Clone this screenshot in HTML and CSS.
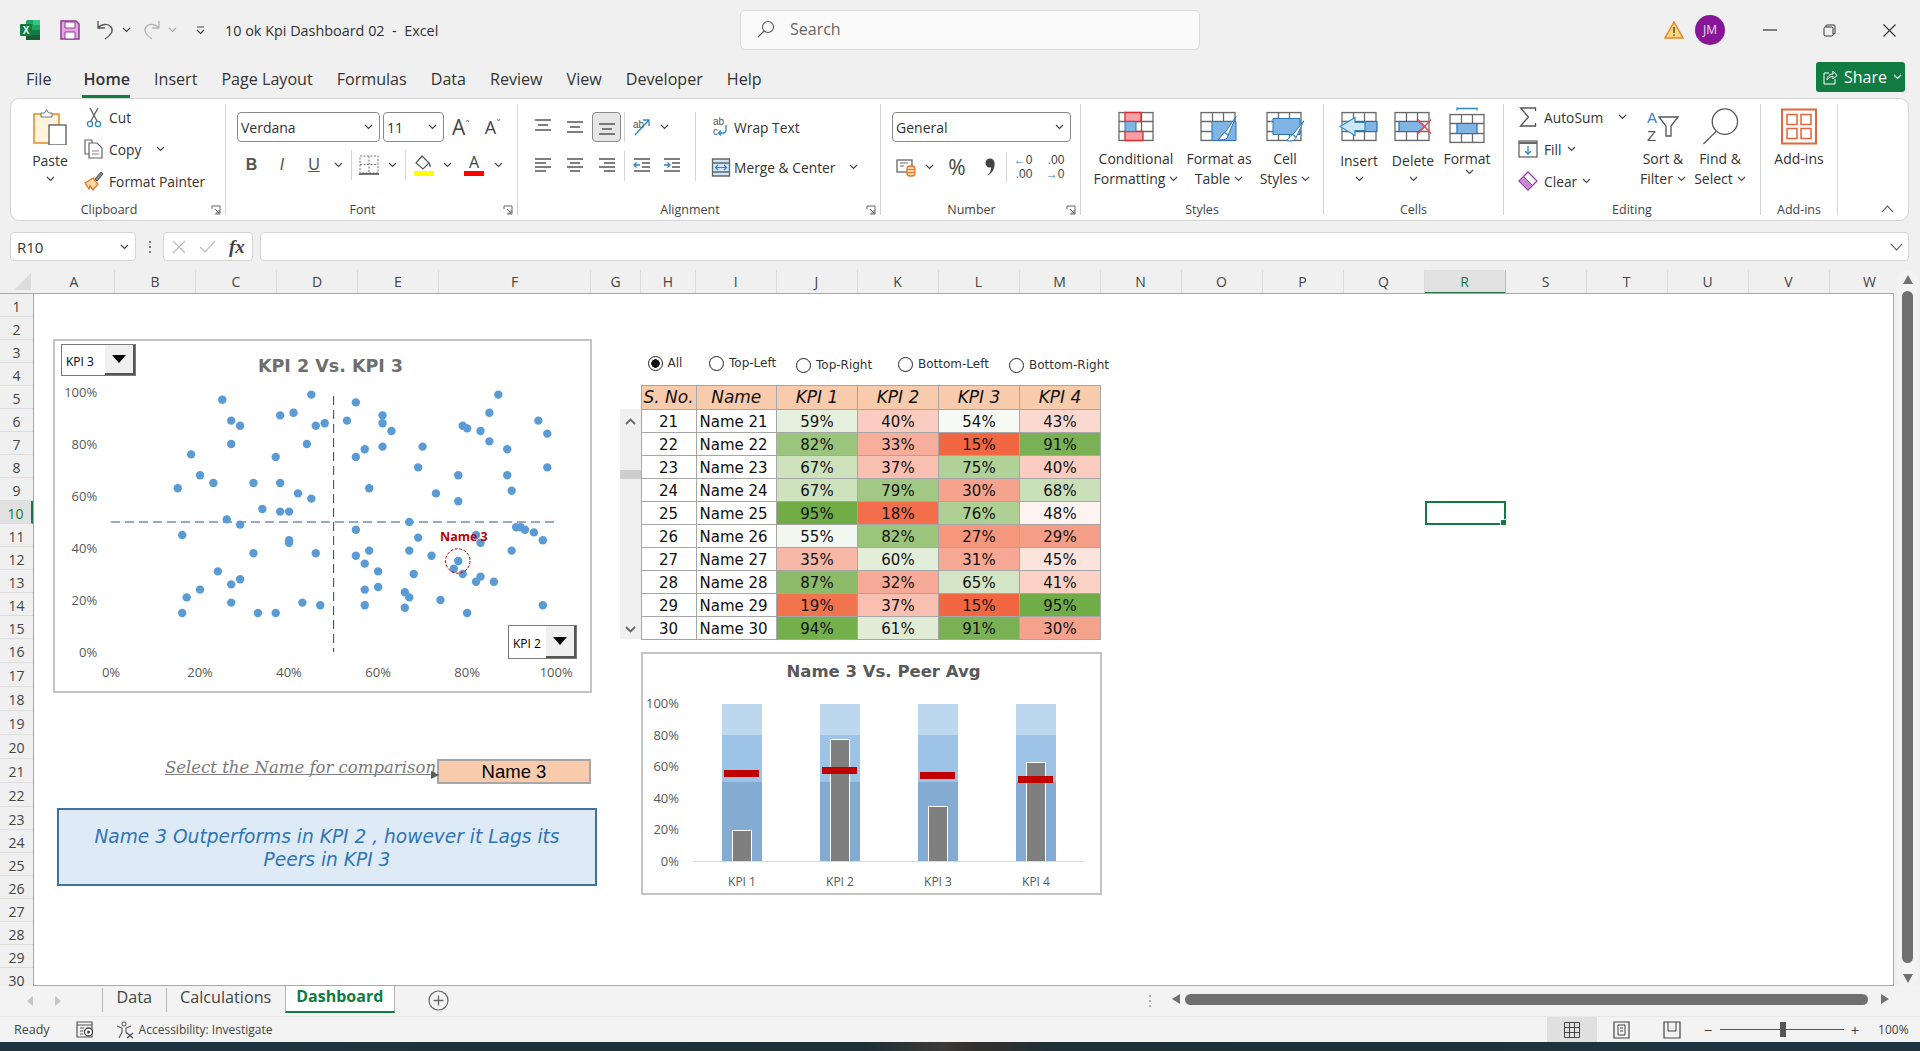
FILE: index.html
```html
<!DOCTYPE html>
<html lang="en">

<head>
    <meta charset="UTF-8">
    <meta name="viewport" content="width=device-width, initial-scale=1.0">
    <title>10 ok Kpi Dashboard 02 - Excel</title>
    <link rel="stylesheet" href="styles.css">
</head>

<body>
    <!-- shared small glyphs -->
    <svg class="sprite" aria-hidden="true">
        <symbol id="caret" viewBox="0 0 9 6"><path d="M1 1l3.5 3.5L8 1" fill="none" stroke="currentColor" stroke-width="1.2"/></symbol>
        <symbol id="launcher" viewBox="0 0 10 10"><path d="M1 4V1h8v8H4M4 4l4 4M8 5v3H5" fill="none" stroke="#666" stroke-width="1"/></symbol>
        <symbol id="al-top" viewBox="0 0 18 18"><path d="M1 2h16M4 7h10M1 12h16" fill="none" stroke="#555" stroke-width="1.4"/></symbol>
        <symbol id="al-mid" viewBox="0 0 18 18"><path d="M1 4h16M4 9h10M1 14h16" fill="none" stroke="#555" stroke-width="1.4"/></symbol>
        <symbol id="al-bot" viewBox="0 0 18 18"><path d="M1 6h16M4 11h10M1 16h16" fill="none" stroke="#555" stroke-width="1.4"/></symbol>
        <symbol id="al-left" viewBox="0 0 18 18"><path d="M1 2h16M1 6h11M1 10h16M1 14h11" fill="none" stroke="#555" stroke-width="1.4"/></symbol>
        <symbol id="al-center" viewBox="0 0 18 18"><path d="M1 2h16M4 6h10M1 10h16M4 14h10" fill="none" stroke="#555" stroke-width="1.4"/></symbol>
        <symbol id="al-right" viewBox="0 0 18 18"><path d="M1 2h16M6 6h11M1 10h16M6 14h11" fill="none" stroke="#555" stroke-width="1.4"/></symbol>
        <symbol id="grid-3" viewBox="0 0 36 30"><path d="M1 1h34v28H1zM12.500 1v28M23.500 1v28M1 10h34M1 20h34" fill="#fff" stroke="#6a6a6a" stroke-width="1.300"/></symbol>
    </svg>

    <div class="app">
        <!-- title bar -->
        <header class="titlebar">
            <div class="quick">
                <svg class="ic-excel" width="20" height="20" viewBox="0 0 20 20">
                    <rect x="6" y="0" width="14" height="20" rx="1.500" fill="#21a366"/>
                    <rect x="6" y="10" width="14" height="5" fill="#107c41"/>
                    <rect x="6" y="15" width="14" height="5" fill="#185c37"/>
                    <rect x="13" y="0" width="7" height="5" fill="#33c481"/>
                    <rect x="0" y="4" width="12" height="12" rx="1" fill="#107c41"/>
                    <text x="6" y="13.500" class="ic-excel-x">X</text>
                </svg>
                <svg class="ic-save" width="20" height="20" viewBox="0 0 20 20">
                    <path d="M1 1h15l3 3v15H1z" fill="#e7a6e0" stroke="#8e3a96" stroke-width="1.500"/>
                    <path d="M5 2h10v6H5zM5 12h10v7H5z" fill="#fff" stroke="#8e3a96"/>
                </svg>
                <svg class="ic-undo" width="19" height="20" viewBox="0 0 19 20"><path d="M2 1v7h7M2 8c3-4 10-5 13-1 3 4 0 8-6 12" fill="none" stroke="#555" stroke-width="1.300"/></svg>
                <svg class="caret"><use href="#caret"/></svg>
                <svg class="ic-redo" width="19" height="20" viewBox="0 0 19 20"><path d="M17 1v7h-7M17 8c-3-4-10-5-13-1-3 4 0 8 6 12" fill="none" stroke="#b5b5b5" stroke-width="1.300"/></svg>
                <svg class="caret faint"><use href="#caret"/></svg>
                <svg class="ic-custom" width="9" height="9" viewBox="0 0 9 9"><path d="M1 1h7M1 4l3.500 3.500L8 4" fill="none" stroke="#444" stroke-width="1.100"/></svg>
                <span class="doc-title">10 ok Kpi Dashboard 02&nbsp; -&nbsp; Excel</span>
            </div>
            <div class="search">
                <svg width="18" height="18" viewBox="0 0 18 18"><circle cx="11" cy="7" r="5.500" fill="none" stroke="#555" stroke-width="1.100"/><path d="M7 11l-6 6" stroke="#555" stroke-width="1.100"/></svg>
                <span>Search</span>
            </div>
            <div class="win-controls">
                <svg class="ic-warn" width="20" height="18" viewBox="0 0 20 18"><path d="M10 1l9 16H1z" fill="#fcd87f" stroke="#e8842a" stroke-width="1.500"/><path d="M10 6v6M10 13.500v1.500" stroke="#333" stroke-width="1.300"/></svg>
                <div class="avatar">JM</div>
                <svg class="ic-min" width="14" height="2" viewBox="0 0 14 2"><path d="M0 1h14" stroke="#333" stroke-width="1.200"/></svg>
                <svg class="ic-restore" width="13" height="13" viewBox="0 0 13 13"><path d="M3 3V2q0-1 1-1h7q1 0 1 1v7q0 1-1 1h-1" fill="none" stroke="#333"/><rect x="1" y="3" width="9" height="9" rx="1.500" fill="none" stroke="#333"/></svg>
                <svg class="ic-close" width="13" height="13" viewBox="0 0 13 13"><path d="M.5.500l12 12M12.500.500l-12 12" stroke="#333" stroke-width="1.100"/></svg>
            </div>
        </header>

        <!-- ribbon tabs -->
        <nav class="tabs">
            <a>File</a>
            <a class="on">Home</a>
            <a>Insert</a>
            <a>Page Layout</a>
            <a>Formulas</a>
            <a>Data</a>
            <a>Review</a>
            <a>View</a>
            <a>Developer</a>
            <a>Help</a>
            <button class="share">
                <svg width="15" height="15" viewBox="0 0 15 15"><path d="M6 3H1v11h11V9M4 10c0-4 3-6 6-6V1l4 4.500L10 9V6.500c-3 0-4 1-6 3.500z" fill="none" stroke="#fff" stroke-width="1"/></svg>
                <span>Share</span>
                <svg class="caret light"><use href="#caret"/></svg>
            </button>
        </nav>

        <!-- ribbon -->
        <section class="ribbon">
            <div class="group g-clip launched">
                <div class="group-body">
                    <div class="big low paste">
                        <svg class="big-ic" width="34" height="37" viewBox="0 0 34 37">
                            <rect x="1" y="6" width="25" height="29" fill="#fff4dc" stroke="#e8912d" stroke-width="1.600"/>
                            <path d="M8 9V5h3.500l2-3.500 2 3.500H19v4z" fill="#fff" stroke="#777"/>
                            <rect x="16" y="17" width="17" height="20" fill="#fff" stroke="#666" stroke-width="1.400"/>
                        </svg>
                        <span>Paste</span>
                        <svg class="caret"><use href="#caret"/></svg>
                    </div>
                    <div class="stack">
                        <div class="small">
                            <svg width="16" height="21" viewBox="0 0 16 21"><path d="M4 1l7 13M12 1L5 14" stroke="#555" stroke-width="1.200"/><circle cx="4" cy="17" r="2.600" fill="none" stroke="#2e86c9" stroke-width="1.300"/><circle cx="12" cy="17" r="2.600" fill="none" stroke="#2e86c9" stroke-width="1.300"/></svg>
                            <span>Cut</span>
                        </div>
                        <div class="small">
                            <svg width="20" height="20" viewBox="0 0 20 20"><path d="M5 15H1V1h7v3" fill="none" stroke="#666" stroke-width="1.200"/><path d="M5 4h8l5 5v10H5z" fill="#fff" stroke="#666" stroke-width="1.200"/><path d="M8 12h7M8 15h7" stroke="#888"/></svg>
                            <span>Copy</span>
                            <svg class="caret copy-caret"><use href="#caret"/></svg>
                        </div>
                        <div class="small">
                            <svg width="20" height="20" viewBox="0 0 20 20"><path d="M1 12l8-5 5 6-5 6-3-4-1 3z" fill="#fbd8a6" stroke="#e0782a" stroke-width="1.300"/><path d="M11 8l6-7 2 2-6 7z" fill="#888" stroke="#555"/></svg>
                            <span>Format Painter</span>
                        </div>
                    </div>
                </div>
                <div class="group-label">Clipboard</div>
                <svg class="launcher"><use href="#launcher"/></svg>
            </div>

            <div class="group g-font launched">
                <div class="group-body column">
                    <div class="row-top font-top">
                        <div class="combo font-name"><span>Verdana</span><svg class="caret"><use href="#caret"/></svg></div>
                        <div class="combo font-size"><span>11</span><svg class="caret"><use href="#caret"/></svg></div>
                        <span class="grow">A<sup>&#710;</sup></span>
                        <span class="shrink">A<sup>&#711;</sup></span>
                    </div>
                    <div class="tool-row font-tools">
                        <b class="tool">B</b>
                        <i class="tool ital">I</i>
                        <u class="tool">U</u>
                        <svg class="caret"><use href="#caret"/></svg>
                        <span class="vsep"></span>
                        <svg width="20" height="20" viewBox="0 0 20 20"><path d="M1 1h18v17H1zM10 1v17M1 9.500h18" fill="none" stroke="#777" stroke-dasharray="2 1.500"/><path d="M0 19h20" stroke="#444" stroke-width="1.500"/></svg>
                        <svg class="caret"><use href="#caret"/></svg>
                        <span class="vsep"></span>
                        <span class="color-tool">
                            <svg width="20" height="17" viewBox="0 0 20 17"><path d="M2 9l6-7 7 7-6 6z" fill="#fff" stroke="#555" stroke-width="1.200"/><path d="M15 8c1 1 2 3 2 4s-2 1-2 0z" fill="#2e75b6"/></svg>
                            <i class="swatch yellow"></i>
                        </span>
                        <svg class="caret"><use href="#caret"/></svg>
                        <span class="color-tool text-a">A<i class="swatch red"></i></span>
                        <svg class="caret"><use href="#caret"/></svg>
                    </div>
                </div>
                <div class="group-label">Font</div>
                <svg class="launcher"><use href="#launcher"/></svg>
            </div>

            <div class="group g-align launched">
                <div class="group-body">
                    <div class="align-grid">
                        <svg class="al"><use href="#al-top"/></svg>
                        <svg class="al"><use href="#al-mid"/></svg>
                        <span class="al-on"><svg class="al"><use href="#al-bot"/></svg></span>
                        <span class="vsep"></span>
                        <svg width="20" height="20" viewBox="0 0 20 20"><path d="M3 18L17 3M11 3h6v6" fill="none" stroke="#2e86c9" stroke-width="1.300"/><text x="1" y="11" class="ic-ab">ab</text></svg>
                        <svg class="caret orient-caret"><use href="#caret"/></svg>

                        <svg class="al"><use href="#al-left"/></svg>
                        <svg class="al"><use href="#al-center"/></svg>
                        <svg class="al"><use href="#al-right"/></svg>
                        <span class="vsep"></span>
                        <svg width="18" height="18" viewBox="0 0 18 18"><path d="M1 2h16M9 6h8M9 10h8M1 14h16" stroke="#555" stroke-width="1.300"/><path d="M7 8H1M3.500 5.500L1 8l2.500 2.500" fill="none" stroke="#2e86c9" stroke-width="1.300"/></svg>
                        <svg width="18" height="18" viewBox="0 0 18 18"><path d="M1 2h16M9 6h8M9 10h8M1 14h16" stroke="#555" stroke-width="1.300"/><path d="M1 8h6M4.500 5.500L7 8l-2.500 2.500" fill="none" stroke="#2e86c9" stroke-width="1.300"/></svg>
                    </div>
                    <div class="wrap-col">
                        <div class="small wide">
                            <svg width="18" height="20" viewBox="0 0 18 20"><text x="1" y="8" class="ic-ab">ab</text><text x="1" y="18" class="ic-ab">c</text><path d="M14 8v5q0 3-3 3H7M9 13.500L6.500 16 9 18.500" fill="none" stroke="#2e86c9" stroke-width="1.300"/></svg>
                            <span>Wrap Text</span>
                        </div>
                        <div class="small wide merge">
                            <svg width="19" height="19" viewBox="0 0 19 19"><path d="M1 1h17v17H1z" fill="#cfe6f7" stroke="#666" stroke-width="1.300"/><path d="M1 5h17M1 14h17" stroke="#666" stroke-width="1.300"/><path d="M4 9.500h11M6.500 7L4 9.500 6.500 12M12.500 7L15 9.500 12.500 12" fill="none" stroke="#2e86c9" stroke-width="1.200"/></svg>
                            <span>Merge &amp; Center</span>
                            <svg class="caret merge-caret"><use href="#caret"/></svg>
                        </div>
                    </div>
                </div>
                <div class="group-label">Alignment</div>
                <svg class="launcher"><use href="#launcher"/></svg>
            </div>

            <div class="group g-num launched">
                <div class="group-body column">
                    <div class="row-top"><div class="combo num-format"><span>General</span><svg class="caret"><use href="#caret"/></svg></div></div>
                    <div class="tool-row num-tools">
                        <svg width="20" height="20" viewBox="0 0 20 20"><rect x="1" y="3" width="15" height="12" fill="#fff" stroke="#666" stroke-width="1.300"/><path d="M4 6h8M4 9h4" stroke="#666"/><rect x="11" y="9" width="8" height="10" rx="3" fill="#fbd8a6" stroke="#e0782a" stroke-width="1.300"/><path d="M11 12.500h8M11 15.500h8" stroke="#e0782a"/></svg>
                        <svg class="caret"><use href="#caret"/></svg>
                        <span class="percent">%</span>
                        <svg width="10" height="18" viewBox="0 0 10 18"><circle cx="5" cy="5" r="4.500" fill="#444"/><path d="M9.500 5c.5 6-2.500 10.500-7 12.500 2.500-2.500 3.500-5 3.500-8z" fill="#444"/></svg>
                        <span class="vsep"></span>
                        <span class="dec"><em><b>&#8592;</b>0</em><em>.00</em></span>
                        <span class="dec"><em>.00</em><em><b>&#8594;</b>0</em></span>
                    </div>
                </div>
                <div class="group-label">Number</div>
                <svg class="launcher"><use href="#launcher"/></svg>
            </div>

            <div class="group g-styles">
                <div class="group-body">
                    <div class="big cond">
                        <svg class="big-ic" width="36" height="30" viewBox="0 0 36 30"><use href="#grid-3" width="36" height="30"/><path d="M7 1h16v9H7zM7 20h18v9H7z" fill="#f7a1a6" stroke="#d92d32" stroke-width="1.300"/><path d="M7 10h11v10H7z" fill="#7fb4e4" stroke="#2f75b5"/></svg>
                        <span>Conditional</span>
                        <span>Formatting<svg class="caret"><use href="#caret"/></svg></span>
                    </div>
                    <div class="big fmt">
                        <svg class="big-ic" width="38" height="30" viewBox="0 0 38 30"><use href="#grid-3" width="36" height="30"/><path d="M12 10h24v19H12z" fill="#7fb4e4" stroke="#2f75b5"/><path d="M36 5L25 21l3 3zM25 21c-4 1-3 5-7 7 5 1 10 0 10-4z" fill="#fff" stroke="#2f75b5"/></svg>
                        <span>Format as</span>
                        <span>Table<svg class="caret"><use href="#caret"/></svg></span>
                    </div>
                    <div class="big cell">
                        <svg class="big-ic" width="38" height="30" viewBox="0 0 38 30"><use href="#grid-3" width="36" height="30"/><path d="M7 7h27v16H7z" fill="#7fb4e4" stroke="#2f75b5"/><path d="M38 9L27 23l3 3zM27 23c-4 1-3 4-7 6 5 1 10 0 10-3z" fill="#fff" stroke="#2f75b5"/></svg>
                        <span>Cell</span>
                        <span>Styles<svg class="caret"><use href="#caret"/></svg></span>
                    </div>
                </div>
                <div class="group-label">Styles</div>
            </div>

            <div class="group g-cells">
                <div class="group-body">
                    <div class="big low">
                        <svg class="big-ic" width="40" height="30" viewBox="0 0 40 30"><g transform="translate(2)"><use href="#grid-3" width="36" height="30"/></g><path d="M8 10h30v10H8z" fill="#7fb4e4" stroke="#1f6fb5" stroke-width="1.200"/><path d="M16 6L1 15l15 9v-5h10v-8H16z" fill="#cfe6f7" stroke="#2e86c9" stroke-width="1.200"/></svg>
                        <span>Insert</span>
                        <svg class="caret"><use href="#caret"/></svg>
                    </div>
                    <div class="big low">
                        <svg class="big-ic" width="38" height="30" viewBox="0 0 38 30"><use href="#grid-3" width="36" height="30"/><path d="M5 10h20l6 5-6 5H5z" fill="#7fb4e4" stroke="#1f6fb5" stroke-width="1.200"/><path d="M24 8l13 14M37 8L24 22" stroke="#f0484e" stroke-width="1.500"/></svg>
                        <span>Delete</span>
                        <svg class="caret"><use href="#caret"/></svg>
                    </div>
                    <div class="big">
                        <svg class="big-ic fmt-cell" width="36" height="36" viewBox="0 0 36 36"><path d="M8 1h20M8 0v3M28 0v3" stroke="#2e86c9" stroke-width="1.300"/><g transform="translate(0 6)"><use href="#grid-3" width="36" height="30"/></g><path d="M8 16h20v10H8z" fill="#7fb4e4" stroke="#1f6fb5" stroke-width="1.200"/></svg>
                        <span>Format</span>
                        <svg class="caret"><use href="#caret"/></svg>
                    </div>
                </div>
                <div class="group-label">Cells</div>
            </div>

            <div class="group g-edit">
                <div class="group-body">
                    <div class="stack edit-stack">
                        <div class="small">
                            <svg width="17" height="20" viewBox="0 0 17 20"><path d="M16 4V1H1l8 9-8 9h15v-3" fill="none" stroke="#555" stroke-width="1.300"/></svg>
                            <span>AutoSum</span>
                            <svg class="caret sum-caret"><use href="#caret"/></svg>
                        </div>
                        <div class="small">
                            <svg width="20" height="18" viewBox="0 0 20 18"><rect x="1" y="1" width="18" height="16" fill="#fff" stroke="#666" stroke-width="1.300"/><path d="M1 3h18" stroke="#666" stroke-width="2"/><path d="M10 6v8M7 11l3 3 3-3" fill="none" stroke="#2e86c9" stroke-width="1.300"/></svg>
                            <span>Fill</span>
                            <svg class="caret"><use href="#caret"/></svg>
                        </div>
                        <div class="small">
                            <svg width="20" height="20" viewBox="0 0 20 20"><path d="M10 1l9 9-9 9-9-9z" fill="#fff" stroke="#9a3fa8" stroke-width="1.300"/><path d="M5.500 5.500l9 9L10 19l-9-9z" fill="#c68ad0" stroke="#9a3fa8"/></svg>
                            <span>Clear</span>
                            <svg class="caret"><use href="#caret"/></svg>
                        </div>
                    </div>
                    <div class="big sort">
                        <div class="big-ic sort-ic">
                            <span class="az"><em>A</em><em>Z</em></span>
                            <svg width="21" height="21" viewBox="0 0 21 21"><path d="M1 1h19l-7 9v10h-5V10z" fill="#fff" stroke="#555" stroke-width="1.300"/></svg>
                        </div>
                        <span>Sort &amp;</span>
                        <span>Filter<svg class="caret"><use href="#caret"/></svg></span>
                    </div>
                    <div class="big find">
                        <svg class="big-ic" width="37" height="38" viewBox="0 0 37 38"><circle cx="23" cy="14" r="13" fill="#fff" stroke="#555" stroke-width="1.300"/><path d="M14 24L1 37" stroke="#555" stroke-width="1.300"/></svg>
                        <span>Find &amp;</span>
                        <span>Select<svg class="caret"><use href="#caret"/></svg></span>
                    </div>
                </div>
                <div class="group-label">Editing</div>
            </div>

            <div class="group g-add">
                <div class="group-body">
                    <div class="big add">
                        <svg class="big-ic" width="36" height="36" viewBox="0 0 36 36"><path d="M1 1h34v34H1z" fill="#fff" stroke="#e0673a" stroke-width="2"/><path d="M6 6h10v10H6zM20 6h10v10H20zM6 20h10v10H6zM20 20h10v10H20z" fill="#fff" stroke="#e0673a" stroke-width="1.500"/></svg>
                        <span>Add-ins</span>
                    </div>
                </div>
                <div class="group-label">Add-ins</div>
            </div>
            <svg class="collapse" width="13" height="8" viewBox="0 0 13 8"><path d="M1 7l5.500-6L12 7" fill="none" stroke="#444" stroke-width="1.100"/></svg>
        </section>

        <!-- formula bar -->
        <div class="formula">
            <div class="namebox"><span>R10</span><svg class="caret"><use href="#caret"/></svg></div>
            <span class="fdots"></span>
            <div class="fx-box">
                <svg width="14" height="14" viewBox="0 0 14 14"><path d="M1 1l12 12M13 1L1 13" stroke="#bbb" stroke-width="1.200"/></svg>
                <svg width="17" height="13" viewBox="0 0 17 13"><path d="M1 7l5 5L16 1" fill="none" stroke="#bbb" stroke-width="1.200"/></svg>
                <span class="fx">fx</span>
            </div>
            <div class="fbar"><svg class="fbar-caret" width="13" height="8" viewBox="0 0 13 8"><path d="M1 1l5.500 6L12 1" fill="none" stroke="#444" stroke-width="1.100"/></svg></div>
        </div>

        <!-- worksheet -->
        <main class="workspace">
            <div class="corner"><i></i></div>
            <div class="colhead">
                <span>A</span><span>B</span><span>C</span><span>D</span><span>E</span><span>F</span><span>G</span><span>H</span><span>I</span><span>J</span><span>K</span><span>L</span><span>M</span><span>N</span><span>O</span><span>P</span><span>Q</span><span class="on">R</span><span>S</span><span>T</span><span>U</span><span>V</span><span>W</span>
            </div>
            <div class="vscroll">
                <i class="tri-up"></i>
                <i class="vthumb"></i>
                <i class="tri-down"></i>
            </div>
            <div class="rowhead">
                <span>1</span><span>2</span><span>3</span><span>4</span><span>5</span><span>6</span><span>7</span><span>8</span><span>9</span><span class="on">10</span><span>11</span><span>12</span><span>13</span><span>14</span><span>15</span><span>16</span><span>17</span><span>18</span><span>19</span><span>20</span><span>21</span><span>22</span><span>23</span><span>24</span><span>25</span><span>26</span><span>27</span><span>28</span><span>29</span><span>30</span>
            </div>

            <div class="sheet">
                <!-- scatter chart -->
                <div class="scatter">
                    <div class="scatter-title">KPI 2 Vs. KPI 3</div>
                    <svg class="plot">
                        <text class="ax" x="-3.100%" y="0%">100%</text>
                        <text class="ax" x="-3.100%" y="20%">80%</text>
                        <text class="ax" x="-3.100%" y="40%">60%</text>
                        <text class="ax" x="-3.100%" y="60%">40%</text>
                        <text class="ax" x="-3.100%" y="80%">20%</text>
                        <text class="ax" x="-3.100%" y="100%">0%</text>
                        <text class="ax mid" x="0%" y="107.700%">0%</text>
                        <text class="ax mid" x="20%" y="107.700%">20%</text>
                        <text class="ax mid" x="40%" y="107.700%">40%</text>
                        <text class="ax mid" x="60%" y="107.700%">60%</text>
                        <text class="ax mid" x="80%" y="107.700%">80%</text>
                        <text class="ax mid" x="100%" y="107.700%">100%</text>
                        <line class="cross" x1="0%" x2="100%" y1="50%" y2="50%"/>
                        <line class="cross" x1="50%" x2="50%" y1="1.500%" y2="100%"/>
                        <g class="dots">
                            <circle cx="25%" cy="3%"/><circle cx="45%" cy="1%"/><circle cx="55%" cy="4%"/><circle cx="87%" cy="1%"/><circle cx="85%" cy="8%"/><circle cx="41%" cy="8%"/><circle cx="38%" cy="9%"/><circle cx="27%" cy="11%"/><circle cx="29%" cy="13%"/><circle cx="46%" cy="13%"/>
                            <circle cx="48%" cy="12%"/><circle cx="53%" cy="11%"/><circle cx="61%" cy="9%"/><circle cx="61%" cy="12%"/><circle cx="63%" cy="15%"/><circle cx="79%" cy="13%"/><circle cx="80%" cy="14%"/><circle cx="83%" cy="15%"/><circle cx="96%" cy="11%"/><circle cx="98%" cy="16%"/>
                            <circle cx="27%" cy="20%"/><circle cx="44%" cy="20%"/><circle cx="85%" cy="19%"/><circle cx="61%" cy="21%"/><circle cx="57%" cy="22%"/><circle cx="70%" cy="21%"/><circle cx="89%" cy="22%"/><circle cx="18%" cy="24%"/><circle cx="37%" cy="25%"/><circle cx="55%" cy="25%"/>
                            <circle cx="69%" cy="29%"/><circle cx="98%" cy="29%"/><circle cx="20%" cy="32%"/><circle cx="23%" cy="35%"/><circle cx="32%" cy="35%"/><circle cx="38%" cy="35%"/><circle cx="78%" cy="32%"/><circle cx="89%" cy="32%"/><circle cx="15%" cy="37%"/><circle cx="58%" cy="37%"/>
                            <circle cx="42%" cy="39%"/><circle cx="45%" cy="41%"/><circle cx="73%" cy="39%"/><circle cx="90%" cy="38%"/><circle cx="78%" cy="42%"/><circle cx="34%" cy="45%"/><circle cx="38%" cy="46%"/><circle cx="40%" cy="46%"/><circle cx="26%" cy="49%"/><circle cx="29%" cy="51%"/>
                            <circle cx="67%" cy="50%"/><circle cx="55%" cy="53%"/><circle cx="16%" cy="55%"/><circle cx="91%" cy="52%"/><circle cx="92%" cy="52%"/><circle cx="93%" cy="53%"/><circle cx="95%" cy="54%"/><circle cx="97%" cy="57%"/><circle cx="69%" cy="56%"/><circle cx="82%" cy="55%"/>
                            <circle cx="83%" cy="58%"/><circle cx="40%" cy="57%"/><circle cx="40%" cy="58%"/><circle cx="32%" cy="62%"/><circle cx="46%" cy="62%"/><circle cx="55%" cy="63%"/><circle cx="58%" cy="61%"/><circle cx="67%" cy="61%"/><circle cx="72%" cy="63%"/><circle cx="90%" cy="61%"/>
                            <circle cx="78%" cy="65%"/><circle cx="57%" cy="66%"/><circle cx="77%" cy="68%"/><circle cx="79%" cy="70%"/><circle cx="24%" cy="69%"/><circle cx="60%" cy="69%"/><circle cx="68%" cy="70%"/><circle cx="29%" cy="72%"/><circle cx="27%" cy="74%"/><circle cx="83%" cy="71%"/>
                            <circle cx="82%" cy="73%"/><circle cx="86%" cy="73%"/><circle cx="20%" cy="76%"/><circle cx="57%" cy="76%"/><circle cx="60%" cy="75%"/><circle cx="66%" cy="77%"/><circle cx="17%" cy="79%"/><circle cx="67%" cy="79%"/><circle cx="74%" cy="80%"/><circle cx="27%" cy="81%"/>
                            <circle cx="43%" cy="81%"/><circle cx="16%" cy="85%"/><circle cx="33%" cy="85%"/><circle cx="37%" cy="85%"/><circle cx="47%" cy="82%"/><circle cx="57%" cy="82%"/><circle cx="66%" cy="83%"/><circle cx="80%" cy="85%"/><circle cx="97%" cy="82%"/>
                        </g>
                        <circle class="pick" cx="77.900%" cy="65%"/>
                        <text class="pick-name" x="73.900%" y="56%">Name 3</text>
                    </svg>
                    <div class="dd dd-y"><span>KPI 3</span><i><b></b></i></div>
                    <div class="dd dd-x"><span>KPI 2</span><i><b></b></i></div>
                </div>

                <!-- filter radios -->
                <div class="radios">
                    <label class="radio checked"><i></i>All</label>
                    <label class="radio"><i></i>Top-Left</label>
                    <label class="radio low"><i></i>Top-Right</label>
                    <label class="radio mid"><i></i>Bottom-Left</label>
                    <label class="radio low"><i></i>Bottom-Right</label>
                </div>

                <!-- table scroller -->
                <div class="tscroll">
                    <svg width="11" height="7" viewBox="0 0 11 7"><path d="M1 6l4.500-4.500L10 6" fill="none" stroke="#666" stroke-width="1.800"/></svg>
                    <i class="tthumb"></i>
                    <svg width="11" height="7" viewBox="0 0 11 7"><path d="M1 1l4.500 4.500L10 1" fill="none" stroke="#666" stroke-width="1.800"/></svg>
                </div>

                <table class="kpi">
                    <colgroup><col class="c-no"><col class="c-name"><col class="c-k"><col class="c-k"><col class="c-k"><col class="c-k"></colgroup>
                    <thead>
                        <tr><th>S. No.</th><th>Name</th><th>KPI 1</th><th>KPI 2</th><th>KPI 3</th><th>KPI 4</th></tr>
                    </thead>
                    <tbody>
                        <tr><td>21</td><td class="nm">Name 21</td><td style="background:#e6f0df">59%</td><td style="background:#fbccc0">40%</td><td style="background:#f6f9f4">54%</td><td style="background:#fbd9d0">43%</td></tr>
                        <tr><td>22</td><td class="nm">Name 22</td><td style="background:#9bc47c">82%</td><td style="background:#f7ae9c">33%</td><td style="background:#f26641">15%</td><td style="background:#7bb155">91%</td></tr>
                        <tr><td>23</td><td class="nm">Name 23</td><td style="background:#cde2bd">67%</td><td style="background:#f9bfb0">37%</td><td style="background:#b0d197">75%</td><td style="background:#fbccc0">40%</td></tr>
                        <tr><td>24</td><td class="nm">Name 24</td><td style="background:#cde2bd">67%</td><td style="background:#a2c885">79%</td><td style="background:#f6a38e">30%</td><td style="background:#cae0b9">68%</td></tr>
                        <tr><td>25</td><td class="nm">Name 25</td><td style="background:#70ad47">95%</td><td style="background:#f36f4c">18%</td><td style="background:#aed094">76%</td><td style="background:#fef3f0">48%</td></tr>
                        <tr><td>26</td><td class="nm">Name 26</td><td style="background:#f2f7ef">55%</td><td style="background:#9bc47c">82%</td><td style="background:#f5977d">27%</td><td style="background:#f59e87">29%</td></tr>
                        <tr><td>27</td><td class="nm">Name 27</td><td style="background:#f8b8a8">35%</td><td style="background:#e2eed9">60%</td><td style="background:#f7a894">31%</td><td style="background:#fce4de">45%</td></tr>
                        <tr><td>28</td><td class="nm">Name 28</td><td style="background:#8dbb6a">87%</td><td style="background:#f6aa97">32%</td><td style="background:#d3e5c5">65%</td><td style="background:#fbd1c6">41%</td></tr>
                        <tr><td>29</td><td class="nm">Name 29</td><td style="background:#f2744f">19%</td><td style="background:#f9bfb0">37%</td><td style="background:#f26641">15%</td><td style="background:#70ad47">95%</td></tr>
                        <tr><td>30</td><td class="nm">Name 30</td><td style="background:#73af4b">94%</td><td style="background:#e0ecd6">61%</td><td style="background:#7bb155">91%</td><td style="background:#f6a38e">30%</td></tr>
                    </tbody>
                </table>

                <!-- bullet chart -->
                <div class="bullet-chart">
                    <div class="bullet-title">Name 3 Vs. Peer Avg</div>
                    <div class="bullet-plot">
                        <div class="bullet-y"><span>100%</span><span>80%</span><span>60%</span><span>40%</span><span>20%</span><span>0%</span></div>
                        <div class="bullets">
                            <div class="bullet"><i class="band b3"></i><i class="band b2"></i><i class="band b1"></i><i class="actual" style="height:20%"></i><i class="peer" style="bottom:53.800%"></i></div>
                            <div class="bullet"><i class="band b3"></i><i class="band b2"></i><i class="band b1"></i><i class="actual" style="height:78%"></i><i class="peer" style="bottom:55.700%"></i></div>
                            <div class="bullet"><i class="band b3"></i><i class="band b2"></i><i class="band b1"></i><i class="actual" style="height:35%"></i><i class="peer" style="bottom:52.500%"></i></div>
                            <div class="bullet"><i class="band b3"></i><i class="band b2"></i><i class="band b1"></i><i class="actual" style="height:63%"></i><i class="peer" style="bottom:50%"></i></div>
                        </div>
                    </div>
                    <div class="bullet-x"><span>KPI 1</span><span>KPI 2</span><span>KPI 3</span><span>KPI 4</span></div>
                </div>

                <div class="pick-label">Select the Name for comparison</div>
                <div class="pick-cell">Name 3</div>
                <div class="comment">Name 3 Outperforms in KPI 2 , however it Lags its<br>Peers in KPI 3</div>
                <div class="selected"></div>
            </div>
        </main>

        <!-- sheet tabs -->
        <div class="sheetbar">
            <i class="nav-l"></i>
            <i class="nav-r"></i>
            <a class="stab first">Data</a>
            <a class="stab">Calculations</a>
            <a class="stab active">Dashboard</a>
            <svg class="addsheet" width="21" height="21" viewBox="0 0 21 21"><circle cx="10.500" cy="10.500" r="9.500" fill="none" stroke="#666" stroke-width="1.200"/><path d="M10.500 5.500v10M5.500 10.500h10" stroke="#666" stroke-width="1.300"/></svg>
            <span class="hdots"></span>
            <i class="tri-left"></i>
            <i class="hthumb"></i>
            <i class="tri-right"></i>
        </div>

        <!-- status bar -->
        <footer class="status">
            <span class="ready">Ready</span>
            <svg class="st-macro" width="18" height="17" viewBox="0 0 18 17"><path d="M1 1h15v15H1zM1 4h15" fill="none" stroke="#555" stroke-width="1.200"/><path d="M4 7h4M4 10h3M4 13h3" stroke="#555"/><circle cx="12.500" cy="11" r="4" fill="#fff" stroke="#444" stroke-width="1.300"/><circle cx="12.500" cy="11" r="1.500" fill="#444"/></svg>
            <svg class="st-acc" width="18" height="18" viewBox="0 0 18 18"><circle cx="8" cy="3" r="2" fill="none" stroke="#555"/><path d="M1 5l5 2v4l-3 6M15 5l-5 2v4l1 2" fill="none" stroke="#555" stroke-width="1.100"/><path d="M11 12l6 5M17 12l-6 5" stroke="#444" stroke-width="1.100"/></svg>
            <span class="acc">Accessibility: Investigate</span>
            <div class="views">
                <span class="view on"><svg width="16" height="16" viewBox="0 0 16 16"><path d="M.5.500h15v15H.500zM5.500.500v15M10.500.500v15M.500 5.500h15M.500 10.500h15" fill="none" stroke="#444"/></svg></span>
                <span class="view"><svg width="18" height="18" viewBox="0 0 18 18"><path d="M1 1h15v16H1z" fill="none" stroke="#444" stroke-width="1.200"/><path d="M5 4h7v10H5z" fill="none" stroke="#444"/><path d="M7 7h3M7 10h3" stroke="#444"/></svg></span>
                <span class="view"><svg width="18" height="18" viewBox="0 0 18 18"><path d="M1 1h16v16H1z" fill="none" stroke="#444" stroke-width="1.200"/><path d="M5 1v9h8V1" fill="none" stroke="#444"/></svg></span>
            </div>
            <span class="zoom-btn minus">&#8722;</span>
            <span class="slider"><i></i></span>
            <span class="zoom-btn">+</span>
            <span class="zoom-val">100%</span>
        </footer>
        <div class="taskbar"></div>
    </div>
</body>

</html>
```
FILE: styles.css
```css
* {
    box-sizing: border-box;
    margin: 0;
    padding: 0;
}

html,
body {
    height: 100%;
    overflow: hidden;
}

body {
    font-family: "Open Sans", "Noto Sans", sans-serif;
    font-size: 13px;
    color: #333;
    background: #f0f0f0;
}

.sprite {
    display: none;
}

svg {
    flex: none;
    display: block;
}

.caret {
    width: 9px;
    height: 6px;
    color: #444;
}

.caret.faint {
    opacity: .4;
}

.caret.light {
    color: #fff;
}

.app {
    display: flex;
    flex-direction: column;
    height: 1051px;
}

/* title bar */
.titlebar {
    display: flex;
    align-items: center;
    height: 60px;
    flex: none;
}

.quick {
    display: flex;
    align-items: center;
    width: 740px;
    padding-left: 20px;
}

.ic-excel-x {
    font: bold 10px "Liberation Sans", sans-serif;
    fill: #fff;
    text-anchor: middle;
}

.ic-save {
    margin-left: 20px;
}

.ic-undo {
    margin-left: 16px;
}

.quick .caret {
    margin-left: 7px;
}

.ic-redo {
    margin-left: 11px;
}

.ic-custom {
    margin-left: 19px;
}

.doc-title {
    margin-left: 20px;
    font-size: 14.400px;
    color: #333;
    white-space: nowrap;
}

.search {
    display: flex;
    align-items: center;
    gap: 15px;
    width: 460px;
    height: 40px;
    padding: 0 0 2px 16px;
    background: #fafafa;
    border: 1px solid #dcdcdc;
    border-radius: 5px;
    font-size: 16px;
    color: #666;
}

.win-controls {
    display: flex;
    align-items: center;
    flex: 1;
    padding-left: 464px;
}

.avatar {
    width: 30px;
    height: 30px;
    margin-left: 11px;
    border-radius: 50%;
    background: #881798;
    color: #eeddee;
    font-size: 12px;
    line-height: 30px;
    text-align: center;
}

.ic-min {
    margin-left: 38px;
}

.ic-restore {
    margin-left: 46px;
}

.ic-close {
    margin-left: 47px;
}

/* ribbon tabs */
.tabs {
    position: relative;
    display: flex;
    align-items: center;
    gap: 24px;
    height: 38px;
    flex: none;
    padding: 0 15px 0 26px;
    font-size: 16.100px;
    color: #333;
}

.tabs a.on {
    margin-left: 8px;
    font-weight: 600;
    color: #333;
}

.tabs a.on::after {
    content: "";
    position: absolute;
    width: 48px;
    height: 3px;
    margin: 27px 0 0 -48px;
    background: #107c41;
}

.share {
    display: flex;
    align-items: center;
    gap: 6px;
    width: 89px;
    height: 30px;
    margin: 0 0 4px auto;
    padding-left: 7px;
    border: 0;
    border-radius: 3px;
    background: #107c41;
    color: #fff;
    font: 16px "Open Sans", sans-serif;
}

/* ribbon */
.ribbon {
    position: relative;
    display: flex;
    flex: none;
    width: 1899px;
    height: 123px;
    margin-left: 10px;
    padding-top: 5px;
    background: #fff;
    border: 1px solid #d5d5d5;
    border-radius: 9px;
}

.group {
    position: relative;
    flex: none;
    display: flex;
    flex-direction: column;
    height: 111px;
    border-right: 1px solid #d4d4d4;
}

.g-clip {
    width: 215px;
}

.g-font {
    width: 292px;
}

.g-align {
    width: 363px;
}

.g-num {
    width: 200px;
}

.g-styles {
    width: 243px;
}

.g-cells {
    width: 180px;
}

.g-edit {
    width: 257px;
}

.g-add {
    width: 77px;
}

.group-body {
    display: flex;
    flex: 1;
    min-height: 0;
    font-size: 14px;
}

.group-body.column {
    flex-direction: column;
}

.group-label {
    height: 12px;
    font-size: 12.500px;
    line-height: 14px;
    text-align: center;
    color: #444;
}

.launched .group-label {
    padding-right: 18px;
}

.launcher {
    position: absolute;
    right: 4px;
    bottom: 0;
    width: 10px;
    height: 10px;
}

.big {
    display: flex;
    flex-direction: column;
    align-items: center;
    padding-top: 4px;
    line-height: 20px;
    white-space: nowrap;
}

.big-ic {
    height: 37px;
    margin-bottom: 4px;
}

.big .caret {
    display: inline-block;
    margin-left: 4px;
    vertical-align: 2px;
}

.big.low span {
    margin-top: 2px;
}

.big.low > .caret {
    margin: 5px 0 0;
}

.paste {
    width: 58px;
    margin-left: 10px;
}

.paste > .big-ic {
    margin: 0 0 4px;
}

.stack {
    display: flex;
    flex-direction: column;
    gap: 4px;
    margin: -1px 0 0 5px;
}

.small {
    display: flex;
    align-items: center;
    flex: none;
    height: 28px;
    font-size: 13.800px;
    white-space: nowrap;
}

.small > svg:first-child {
    width: 20px;
    margin-right: 5px;
}

.copy-caret {
    margin-left: 15px;
}

/* font group */
.row-top {
    display: flex;
    align-items: center;
    height: 30px;
    margin: 8px 0 0 11px;
}

.combo {
    display: flex;
    align-items: center;
    justify-content: space-between;
    height: 30px;
    padding: 0 6px 0 3px;
    border: 1px solid #8a8a8a;
    border-radius: 4px;
    font-size: 14px;
}

.font-name {
    width: 143px;
}

.font-size {
    width: 61px;
    margin-left: 3px;
}

.grow,
.shrink {
    font-size: 21px;
    line-height: 30px;
    color: #444;
}

.grow {
    margin-left: 8px;
}

.shrink {
    margin-left: 15px;
    font-size: 18px;
}

.grow sup,
.shrink sup {
    font-size: 11px;
    color: #2e86c9;
    vertical-align: 6px;
    line-height: 0;
}

.tool-row {
    display: grid;
    align-items: center;
    justify-items: center;
    height: 30px;
    margin: 8px 0 0 11px;
}

.font-tools {
    grid-template-columns: 29px 32px 32px 16px 11px 24px 22px 5px 32px 14px 40px 9px;
}

.tool {
    font-family: "Liberation Sans", sans-serif;
    font-size: 16px;
    font-style: normal;
    color: #555;
}

.ital {
    font-style: italic;
}

.vsep {
    display: block;
    width: 1px;
    height: 30px;
    background: #d4d4d4;
}

.color-tool {
    display: flex;
    flex-direction: column;
    align-items: center;
    width: 20px;
}

.text-a {
    font-size: 16px;
    line-height: 17px;
    color: #444;
}

.swatch {
    display: block;
    width: 20px;
    height: 5px;
}

.yellow {
    background: #ff0;
}

.red {
    background: #f00;
}

/* alignment group */
.align-grid {
    display: grid;
    grid-template-columns: 31px 33px 31px 5px 30px 30px;
    grid-template-rows: 30px 30px;
    row-gap: 9px;
    align-items: center;
    justify-items: center;
    width: 169px;
    height: 69px;
    margin: 8px 0 0 9px;
    border-right: 1px solid #d4d4d4;
}

.al {
    width: 18px;
    height: 18px;
}

.al-on {
    display: flex;
    align-items: center;
    justify-content: center;
    width: 29px;
    height: 30px;
    background: #e6e6e6;
    border: 1px solid #8a8a8a;
    border-radius: 4px;
}

.orient-caret {
    justify-self: start;
    margin-left: 3px;
}

.ic-ab {
    font: 10px "Liberation Sans", sans-serif;
    fill: #555;
}

.wrap-col {
    display: flex;
    flex-direction: column;
    gap: 12px;
    padding: 9px 0 0 15px;
}

.wrap-col .small > svg:first-child {
    margin-right: 3px;
}

.merge-caret {
    margin-left: 14px;
}

/* number group */
.num-format {
    width: 179px;
}

.num-tools {
    grid-template-columns: 28px 18px 38px 28px 5px 28px 36px;
    margin-top: 10px;
}

.percent {
    font-size: 21px;
    line-height: 30px;
    color: #444;
}

.dec {
    display: flex;
    flex-direction: column;
    font: 12px/14px "Liberation Sans", sans-serif;
    color: #444;
    text-align: right;
}

.dec em {
    font-style: normal;
}

.dec b {
    font-weight: 400;
    color: #2e86c9;
}

/* styles and cells */
.cond {
    width: 80px;
    margin-left: 15px;
}

.fmt {
    width: 86px;
}

.cell {
    width: 46px;
}

.g-cells .group-body {
    padding-left: 8px;
}

.g-cells .big {
    width: 54px;
}

.fmt-cell {
    margin-top: -1px;
    margin-bottom: 5px;
}

.edit-stack {
    width: 118px;
    margin-left: 14px;
}

.edit-stack .small > svg:first-child {
    margin-right: 6px;
}

.edit-stack .caret {
    margin-left: 5px;
}

.edit-stack .sum-caret {
    margin-left: 15px;
}

.sort {
    width: 54px;
}

.find {
    width: 60px;
}

.sort-ic {
    display: flex;
    align-items: center;
    gap: 1px;
}

.az {
    display: flex;
    flex-direction: column;
    font: 15px/18px "Liberation Sans", sans-serif;
}

.az em {
    font-style: normal;
    color: #2e86c9;
}

.az em + em {
    color: #555;
}

.add {
    width: 100%;
}

.collapse {
    position: absolute;
    right: 14px;
    bottom: 7px;
}

/* formula bar */
.formula {
    display: flex;
    align-items: center;
    flex: none;
    height: 29px;
    margin: 11px 11px 0 10px;
}

.namebox {
    display: flex;
    align-items: center;
    justify-content: space-between;
    width: 126px;
    height: 29px;
    padding: 0 6px;
    background: #fff;
    border: 1px solid #d5d5d5;
    border-radius: 4px;
    font-size: 15px;
}

.fdots {
    width: 2px;
    height: 12px;
    margin: 0 12.500px;
    background: repeating-linear-gradient(#777 0 2px, transparent 2px 5px);
}

.fx-box {
    display: flex;
    align-items: center;
    gap: 13px;
    width: 90px;
    height: 29px;
    padding-left: 8px;
    background: #fff;
    border: 1px solid #d5d5d5;
    border-radius: 4px;
}

.fx {
    font: italic bold 19px "Liberation Serif", serif;
    color: #444;
}

.fbar {
    display: flex;
    align-items: center;
    justify-content: flex-end;
    flex: 1;
    height: 29px;
    margin-left: 7px;
    padding-right: 5px;
    background: #fff;
    border: 1px solid #d5d5d5;
    border-radius: 4px;
}

/* worksheet */
.workspace {
    --cols: repeat(5, 81px) 152px 50px 55px 80.500px repeat(14, 81px);
    --rows: repeat(15, 23px) repeat(7, 24px) repeat(8, 23px);
    display: grid;
    grid-template-columns: 34px 1860px 26px;
    grid-template-rows: 24px 692px;
    flex: none;
    height: 716px;
    margin-top: 9px;
}

.corner {
    display: flex;
    justify-content: flex-end;
    padding: 3px 3px 0 0;
    border-bottom: 1px solid #a8a8a8;
}

.corner i {
    width: 0;
    height: 0;
    border-style: solid;
    border-width: 0 0 17px 17px;
    border-color: transparent transparent #dcdcdc;
}

.colhead {
    display: grid;
    grid-template-columns: var(--cols);
    overflow: hidden;
    border-bottom: 1px solid #a8a8a8;
}

.colhead span {
    border-right: 1px solid #dcdcdc;
    font-size: 14px;
    line-height: 23px;
    text-align: center;
    color: #444;
}

.colhead .on {
    background: #e1e1e1;
    color: #107c41;
    border-bottom: 2px solid #217346;
    border-right: 1px solid #c0c0c0;
    height: 24px;
}

.rowhead {
    display: grid;
    grid-template-rows: var(--rows);
    overflow: hidden;
    border-right: 1px solid #a8a8a8;
}

.rowhead span {
    padding-top: 2px;
    border-bottom: 1px solid #dcdcdc;
    font-size: 14px;
    line-height: 22px;
    text-align: center;
    color: #444;
}

.rowhead .on {
    background: #e1e1e1;
    color: #107c41;
    border-right: 2px solid #217346;
}

.vscroll {
    grid-row: 1 / 3;
    grid-column: 3;
    display: flex;
    flex-direction: column;
    align-items: center;
    width: 21px;
    height: 716px;
    margin-left: 3px;
    padding: 5px 0 3px;
    background: #f3f3f3;
    border-radius: 10px;
}

.tri-up,
.tri-down {
    width: 0;
    height: 0;
    border-style: solid;
    border-color: transparent;
    border-width: 0 5.500px;
}

.tri-up {
    border-bottom: 9px solid #707070;
}

.tri-down {
    border-top: 9px solid #707070;
}

.vthumb {
    flex: 1;
    width: 11px;
    margin: 7px 0 11px;
    border-radius: 6px;
    background: #707070;
}

.sheet {
    display: grid;
    grid-template-columns: var(--cols);
    grid-template-rows: var(--rows);
    overflow: hidden;
    background: #fff;
    border-right: 1px solid #a8a8a8;
    border-bottom: 1px solid #a8a8a8;
}

/* scatter */
.scatter {
    position: relative;
    grid-column: 1 / 7;
    grid-row: 3 / 19;
    justify-self: start;
    align-self: start;
    width: 539px;
    height: 354px;
    margin: -1px 0 0 19px;
    border: 2px solid #c4c4c4;
}

.scatter-title {
    padding-top: 15px;
    padding-left: 16px;
    font: bold 17.500px "DejaVu Sans", sans-serif;
    text-align: center;
    color: #6e6e6e;
}

.plot {
    position: absolute;
    left: 56px;
    top: 51px;
    width: 445.200px;
    height: 260px;
    overflow: visible;
}

.ax {
    font: 13px "Open Sans", sans-serif;
    fill: #595959;
    text-anchor: end;
    dominant-baseline: middle;
    transform: translateY(1.500px);
}

.ax.mid {
    text-anchor: middle;
}

.cross {
    stroke: #2f5597;
    stroke-width: 1.100;
    stroke-dasharray: 9 5;
}

.dots circle {
    r: 4.200px;
    fill: #5b9bd5;
}

.pick {
    r: 12.200px;
    fill: none;
    stroke: #c00000;
    stroke-width: 1;
    stroke-dasharray: 3 1.500;
}

.pick-name {
    font: bold 12.500px "Open Sans", sans-serif;
    fill: #c00000;
    dominant-baseline: middle;
}

.dd {
    position: absolute;
    display: flex;
    background: #fff;
    border: 1px solid #7a7a7a;
    font: 12px "Open Sans", sans-serif;
    color: #000;
}

.dd span {
    flex: 1;
    padding: 2px 0 0 4px;
    line-height: 29px;
}

.dd i {
    display: flex;
    align-items: center;
    justify-content: center;
    width: 30px;
    background: #f0f0f0;
    border-right: 2px solid #555;
    border-bottom: 2px solid #555;
}

.dd b {
    width: 0;
    height: 0;
    border-style: solid;
    border-width: 8px 7px 0;
    border-color: #000 transparent transparent;
}

.dd-y {
    left: 6px;
    top: 3px;
    width: 75px;
    height: 32px;
}

.dd-x {
    left: 453px;
    top: 284px;
    width: 69px;
    height: 34px;
}

.dd-x span {
    padding-top: 3px;
}

/* radios */
.radios {
    grid-column: 8 / 19;
    grid-row: 3 / 5;
    display: grid;
    grid-template-columns: 61.500px 87px 102px 111px auto;
    align-items: center;
    padding-left: 6.500px;
    font: 12px "DejaVu Sans", sans-serif;
    color: #333;
}

.radio {
    display: flex;
    align-items: center;
    gap: 5px;
    white-space: nowrap;
}

.radio i {
    width: 15px;
    height: 15px;
    border: 1px solid #222;
    border-radius: 50%;
    background: #fff;
}

.radio.checked i {
    background: radial-gradient(circle, #111 0 4px, #fff 4.500px);
}

.radio.low {
    margin-top: 4px;
}

.radio.mid {
    margin-top: 2px;
}

/* table scroller */
.tscroll {
    grid-column: 7;
    grid-row: 6 / 16;
    justify-self: end;
    display: flex;
    flex-direction: column;
    align-items: center;
    width: 21px;
    padding: 9px 0 6px;
    background: #f0f0f0;
}

.tthumb {
    width: 21px;
    height: 9px;
    margin: 45px 0 auto;
    background: #cdcdcd;
}

/* kpi table */
.kpi {
    grid-column: 8 / 14;
    grid-row: 5 / 16;
    align-self: start;
    width: 459.500px;
    margin: -1px 0 0 -.500px;
    border-collapse: collapse;
    table-layout: fixed;
    font: 15px "DejaVu Sans", sans-serif;
    color: #111;
}

.c-no {
    width: 55px;
}

.c-name {
    width: 80.500px;
}

.c-k {
    width: 81px;
}

.kpi th,
.kpi td {
    height: 23px;
    border: 1px solid #a6a6a6;
    line-height: 21px;
    text-align: center;
    white-space: nowrap;
    overflow: hidden;
}

.kpi td {
    padding-top: 2px;
    line-height: 20px;
}

.kpi th {
    height: 24px;
    background: #f8cbad;
    font-size: 17px;
    font-style: italic;
    font-weight: 400;
}

.kpi td.nm {
    padding-left: 3px;
    text-align: left;
}

/* bullet chart */
.bullet-chart {
    grid-column: 8 / 14;
    grid-row: 16 / 27;
    align-self: start;
    width: 461px;
    height: 243px;
    margin-top: 13px;
    border: 2px solid #c4c4c4;
}

.bullet-title {
    height: 50px;
    padding-left: 24px;
    font: bold 16.500px/35px "DejaVu Sans", sans-serif;
    text-align: center;
    color: #595959;
}

.bullet-plot {
    display: flex;
    height: 158px;
}

.bullet-y {
    display: flex;
    flex-direction: column;
    justify-content: space-between;
    width: 36px;
    margin: -1px 0 1px;
    font-size: 13px;
    line-height: 0;
    text-align: right;
    color: #595959;
}

.bullets {
    display: grid;
    grid-template-columns: repeat(4, 98px);
    width: 391px;
    margin-left: 14px;
    border-bottom: 1px solid #d9d9d9;
}

.bullet {
    position: relative;
    display: flex;
    flex-direction: column;
    justify-self: center;
    width: 40px;
}

.band {
    display: block;
}

.b3 {
    height: 20%;
    background: #bdd7ee;
}

.b2 {
    height: 30%;
    background: #9dc3e6;
}

.b1 {
    height: 50%;
    background: #84acd3;
}

.actual {
    position: absolute;
    left: 10px;
    bottom: 0;
    width: 20px;
    background: #7f7f7f;
    border: 1px solid #fff;
    border-bottom: 0;
}

.peer {
    position: absolute;
    left: 2px;
    width: 35px;
    height: 7px;
    background: #c00000;
}

.bullet-x {
    display: grid;
    grid-template-columns: repeat(4, 98px);
    margin: 13px 0 0 50px;
    font-size: 12px;
    line-height: 14px;
    text-align: center;
    color: #595959;
}

/* comparison cells */
.pick-label {
    position: relative;
    grid-column: 2 / 6;
    grid-row: 21;
    justify-self: start;
    align-self: start;
    width: 274px;
    height: 16px;
    margin-left: 50px;
    border-bottom: 1px solid #7f7f7f;
    font: italic 16.500px/17px "DejaVu Serif", serif;
    color: #7a7a7a;
    white-space: nowrap;
}

.pick-label::after {
    content: "";
    position: absolute;
    right: 0;
    bottom: -5px;
    border-style: solid;
    border-width: 4.500px 0 4.500px 8px;
    border-color: transparent transparent transparent #595959;
}

.pick-cell {
    grid-column: 6;
    grid-row: 21;
    height: 25px;
    margin-left: -2px;
    background: #f8cbad;
    border: 2px solid #a6a6a6;
    font: 18.500px/22px "Liberation Sans", sans-serif;
    text-align: center;
    color: #000;
}

.comment {
    grid-column: 1 / 8;
    grid-row: 23 / 27;
    align-self: start;
    justify-self: start;
    display: flex;
    align-items: center;
    justify-content: center;
    width: 540px;
    height: 78px;
    margin: 1px 0 0 23px;
    padding-top: 1px;
    background: #deeaf6;
    border: 2px solid #41719c;
    font: italic 18.600px/23px "DejaVu Sans", sans-serif;
    text-align: center;
    color: #2e75b6;
}

.selected {
    position: relative;
    grid-column: 18;
    grid-row: 10;
    margin-bottom: -1px;
    border: 2px solid #107c41;
}

.selected::after {
    content: "";
    position: absolute;
    right: -3px;
    bottom: -3px;
    width: 5px;
    height: 5px;
    background: #107c41;
    border: 1px solid #fff;
}

/* sheet tabs */
.sheetbar {
    display: flex;
    align-items: flex-start;
    flex: none;
    height: 30px;
    background: #f3f3f3;
}

.nav-l,
.nav-r {
    width: 0;
    height: 0;
    margin-top: 10px;
    border-style: solid;
    border-color: transparent;
    border-width: 5px 0;
}

.nav-l {
    margin-left: 27px;
    border-right: 6px solid #c4c4c4;
}

.nav-r {
    margin-left: 22px;
    border-left: 6px solid #c4c4c4;
}

.stab {
    height: 24px;
    margin-top: 2px;
    padding: 0 13.500px;
    border-left: 1px solid #b5b5b5;
    font-size: 16.200px;
    line-height: 19px;
    color: #444;
}

.stab.first {
    margin-left: 41px;
}

.stab.active {
    width: 110px;
    height: 27px;
    margin-top: 0;
    padding: 0;
    background: #fff;
    border: 1px solid #b5b5b5;
    border-top: 0;
    border-bottom: 2px solid #107c41;
    font-size: 16px;
    font-weight: 700;
    line-height: 21px;
    text-align: center;
    color: #107c41;
}

.addsheet {
    margin: 4px 0 0 33px;
}

.hdots {
    width: 2px;
    height: 12px;
    margin: 9px 0 0 700px;
    background: repeating-linear-gradient(#aaa 0 2px, transparent 2px 5px);
}

.tri-left,
.tri-right {
    width: 0;
    height: 0;
    margin-top: 8px;
    border-style: solid;
    border-color: transparent;
    border-width: 5.500px 0;
}

.tri-left {
    margin-left: 21px;
    border-right: 8px solid #707070;
}

.tri-right {
    margin-left: 13px;
    border-left: 8px solid #707070;
}

.hthumb {
    width: 683px;
    height: 11px;
    margin: 8px 0 0 5px;
    border-radius: 6px;
    background: #707070;
}

/* status bar */
.status {
    display: flex;
    align-items: center;
    flex: none;
    height: 26px;
    background: #f3f3f3;
    border-top: 1px solid #e8e8e8;
    font-size: 12.500px;
    color: #444;
}

.ready {
    margin-left: 14px;
}

.st-macro {
    margin-left: 26px;
}

.st-acc {
    margin-left: 22px;
}

.acc {
    margin-left: 5px;
    font-size: 12px;
}

.views {
    display: flex;
    height: 25px;
    margin-left: 1274.500px;
}

.view {
    display: flex;
    align-items: center;
    justify-content: center;
    width: 50px;
}

.view.on {
    background: #e0e0e0;
}

.zoom-btn {
    width: 12px;
    margin-left: 5px;
    font-size: 15px;
    text-align: center;
}

.slider {
    position: relative;
    width: 124px;
    height: 1px;
    margin: 0 0 0 6px;
    background: #555;
}

.slider i {
    position: absolute;
    left: 60px;
    top: -7px;
    width: 6px;
    height: 15px;
    background: #555;
}

.zoom-val {
    margin-left: 17px;
    font-size: 12px;
}

.taskbar {
    flex: none;
    height: 9px;
    background: linear-gradient(90deg, #1d3540 0, #1f2f36 45%, #3a3a36 49%, #33302c 51%, #1f2f36 55%, #1d3540 100%);
}
```
